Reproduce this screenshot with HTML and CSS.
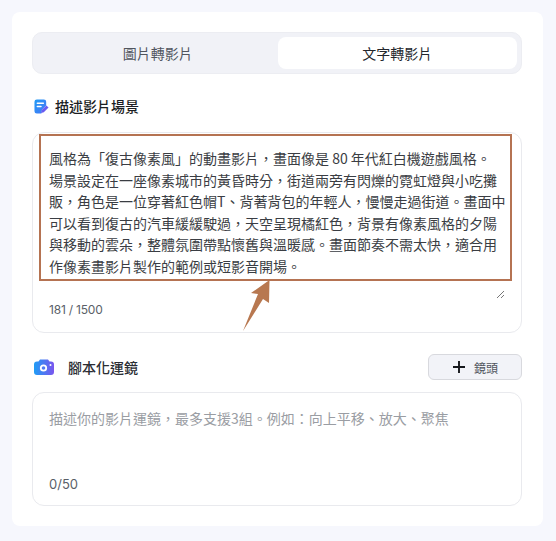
FILE: index.html
```html
<!DOCTYPE html>
<html lang="zh-Hant">
<head>
<meta charset="utf-8">
<title>文字轉影片</title>
<link rel="stylesheet" href="styles.css">
</head>
<body>
<main class="card">
  <div class="tabs">
    <div class="tab">圖片轉影片</div>
    <div class="tab active">文字轉影片</div>
  </div>

  <div class="heading first">
    <svg class="icon-doc" viewBox="0 0 16 16" aria-hidden="true">
      <defs>
        <linearGradient id="gd" x1="0" y1="0" x2="1" y2="1"><stop offset="0" stop-color="#1f9bf5"/><stop offset="1" stop-color="#4a76f6"/></linearGradient>
      </defs>
      <path d="M3 .5h7.500A2.500 2.500 0 0 1 13 3V7l-4.500 4.500-.6 4H3A2.500 2.500 0 0 1 .5 13V3A2.500 2.500 0 0 1 3 .5z" fill="url(#gd)"/>
      <path d="M3.500 4.500h6.500M3.500 8h4" stroke="#fff" stroke-width="1.500" stroke-linecap="round"/>
      <path d="M13.200 6.800l2.300 2.300-5 5-3 .7.700-3z" fill="#6a5cf0"/>
    </svg>
    <span>描述影片場景</span>
  </div>

  <section class="box scene">
    <p class="scene-text">風格為「復古像素風」的動畫影片，畫面像是 80 年代紅白機遊戲風格。<br>場景設定在一座像素城市的黃昏時分，街道兩旁有閃爍的霓虹燈與小吃攤<br>販，角色是一位穿著紅色帽T、背著背包的年輕人，慢慢走過街道。畫面中<br>可以看到復古的汽車緩緩駛過，天空呈現橘紅色，背景有像素風格的夕陽<br>與移動的雲朵，整體氛圍帶點懷舊與溫暖感。畫面節奏不需太快，適合用<br>作像素畫影片製作的範例或短影音開場。</p>
    <div class="counter scene-count">181 / 1500</div>
    <svg class="grip" viewBox="0 0 9 9" aria-hidden="true"><path d="M1 8L8 1M5 8l3-3" stroke="#777" stroke-width="1"/></svg>
    <div class="highlight"></div>
    <svg class="arrow" viewBox="0 0 32 54" aria-hidden="true"><path d="M29.500 1L29 24 23 20 3 52 18 15 11 14z" fill="#b87850"/></svg>
  </section>

  <div class="heading second">
    <div class="heading-label">
      <svg class="icon-cam" viewBox="0 0 20 16" aria-hidden="true">
        <defs>
          <linearGradient id="gc" x1="0" y1="0" x2="1" y2="0"><stop offset="0" stop-color="#1f9df5"/><stop offset="1" stop-color="#7a55ee"/></linearGradient>
        </defs>
        <path d="M6 .5h8l1.500 2H17a3 3 0 0 1 3 3V13a3 3 0 0 1-3 3H3a3 3 0 0 1-3-3V5.500a3 3 0 0 1 3-3h1.500z" fill="url(#gc)"/>
        <circle cx="9.500" cy="9" r="3.600" fill="#fff"/>
        <circle cx="9.500" cy="9" r="1.800" fill="#4f7bf4"/>
        <circle cx="16.500" cy="6" r="1" fill="#fff"/>
      </svg>
      <span>腳本化運鏡</span>
    </div>
    <button class="add-btn" type="button">
      <svg class="plus" viewBox="0 0 12 12" aria-hidden="true"><path d="M6 0v12M0 6h12" stroke="#15171c" stroke-width="1.900"/></svg>
      <span>鏡頭</span>
    </button>
  </div>

  <section class="box shots">
    <p class="placeholder">描述你的影片運鏡，最多支援3組。例如：向上平移、放大、聚焦</p>
    <div class="counter">0/50</div>
  </section>
</main>
</body>
</html>
```
FILE: styles.css
```css
* { box-sizing: border-box; }
html, body { margin: 0; height: 100%; }
body {
  background: #f6f7fd;
  padding: 12px 13px 15px 12px;
  font-family: "Noto Sans CJK TC", "Noto Sans", sans-serif;
  color: #1f2329;
  overflow: hidden;
}
.card {
  height: 514px;
  background: #fff;
  border-radius: 8px;
  padding: 20px 21px 0 20px;
}
.tabs {
  display: grid;
  grid-template-columns: 1fr 1fr;
  height: 42px;
  padding: 4px 4px 4px 5px;
  background: #f1f2f7;
  border: 1px solid #ecedf2;
  border-radius: 10px;
}
.tab {
  display: flex;
  align-items: center;
  justify-content: center;
  height: 32px;
  font-size: 14px;
  color: #50555e;
  border-radius: 8px;
}
.tab.active { background: #fff; color: #23262c; }
.heading {
  display: flex;
  align-items: center;
  font-size: 14px;
  font-weight: 500;
  color: #1b1e24;
}
.heading.first { gap: 7px; height: 24px; margin-top: 20px; padding-left: 2px; }
.heading.second { justify-content: space-between; height: 26px; margin-top: 21px; }
.heading-label { display: flex; align-items: center; gap: 14px; padding-left: 2px; color: #2a2d33; }
.icon-doc { width: 15px; height: 15px; margin-right: -1px; }
.icon-cam { width: 20px; height: 16px; }
.box {
  position: relative;
  border: 1px solid #e9eaee;
  border-radius: 12px;
  background: #fff;
}
.scene { height: 201px; margin-top: 14px; padding: 15px 16px 0; }
.scene-text {
  margin: 0;
  font-size: 14px;
  line-height: 21.600px;
  color: #3a3d43;
  white-space: nowrap;
}
.counter {
  font-family: "Inter", "Noto Sans", sans-serif;
  font-size: 12px;
  color: #5a5f68;
}
.scene-count { margin-top: 24px; letter-spacing: -0.2px; }
.grip { position: absolute; right: 16px; bottom: 33px; width: 9px; height: 9px; }
.highlight {
  position: absolute;
  left: 6px;
  top: 1px;
  width: 473px;
  height: 147px;
  border: 2px solid #b57352;
}
.arrow { position: absolute; left: 207px; top: 146px; width: 32px; height: 54px; }
.add-btn {
  display: flex;
  align-items: center;
  justify-content: center;
  gap: 9px;
  width: 94px;
  height: 26px;
  padding: 0 0 0 1px;
  background: #f2f3f8;
  border: 1px solid #d8d9de;
  border-radius: 6px;
  font: inherit;
  font-size: 12px;
  font-weight: 400;
  color: #50555e;
}
.plus { width: 12px; height: 12px; }
.shots { height: 114px; margin-top: 12px; padding: 15px 16px 0; }
.placeholder { margin: 0; height: 67px; font-size: 14px; line-height: 20px; color: #9a9da3; }
.shots .counter { font-size: 13px; line-height: 18px; }
```
